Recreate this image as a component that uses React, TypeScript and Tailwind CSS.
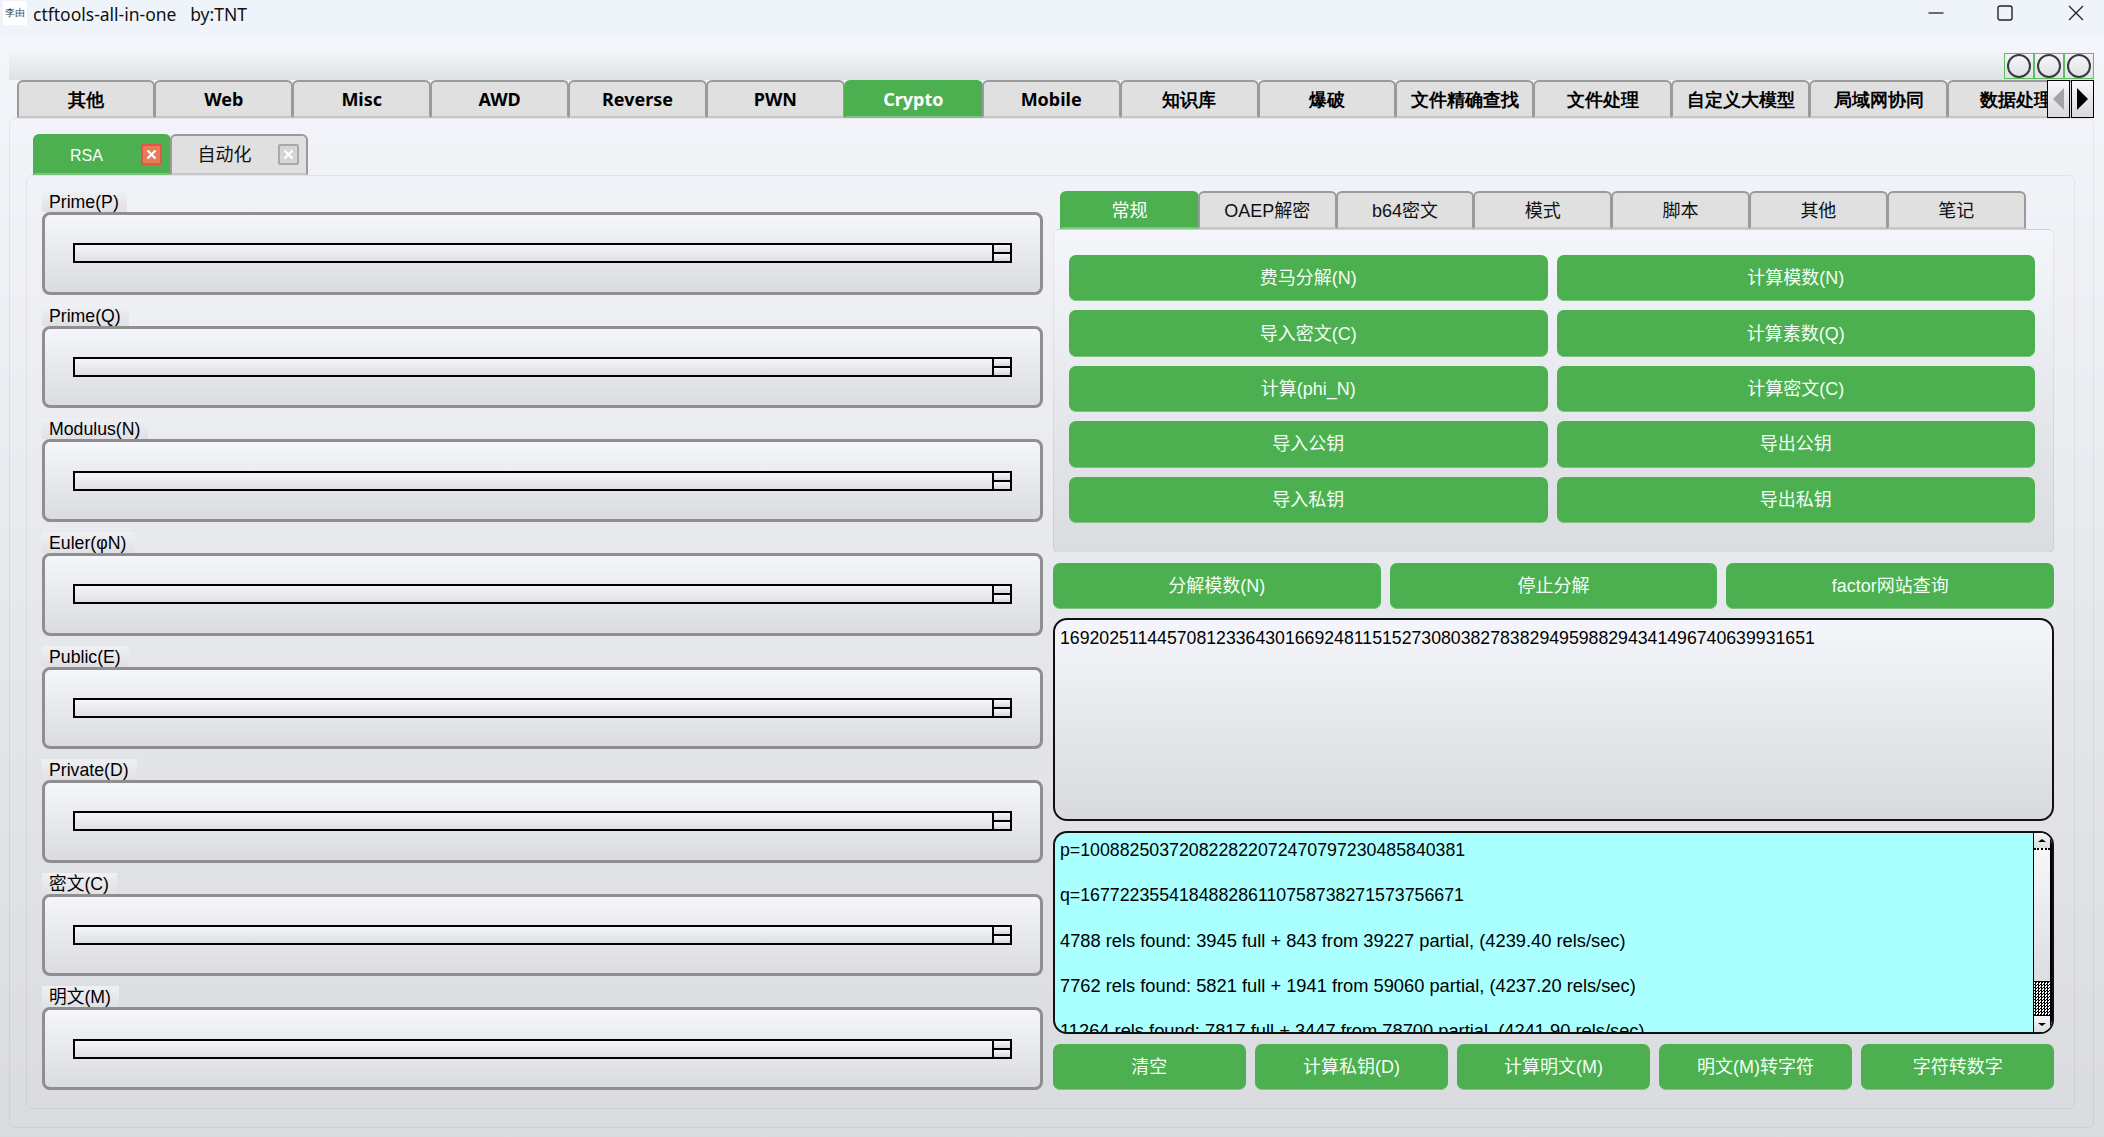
import React from "react";

const TOP = ["其他", "Web", "Misc", "AWD", "Reverse", "PWN", "Crypto", "Mobile", "知识库", "爆破", "文件精确查找", "文件处理", "自定义大模型", "局域网协同", "数据处理"];
const SUB = ["常规", "OAEP解密", "b64密文", "模式", "脚本", "其他", "笔记"];
const FIELDS = ["Prime(P)", "Prime(Q)", "Modulus(N)", "Euler(φN)", "Public(E)", "Private(D)", "密文(C)", "明文(M)"];
const GRID = ["费马分解(N)", "计算模数(N)", "导入密文(C)", "计算素数(Q)", "计算(phi_N)", "计算密文(C)", "导入公钥", "导出公钥", "导入私钥", "导出私钥"];
const NUMS = [
  "p=100882503720822822072470797230485840381",
  "q=167722355418488286110758738271573756671",
];
const RELS = [
  "4788 rels found: 3945 full + 843 from 39227 partial, (4239.40 rels/sec)",
  "7762 rels found: 5821 full + 1941 from 59060 partial, (4237.20 rels/sec)",
  "11264 rels found: 7817 full + 3447 from 78700 partial, (4241.90 rels/sec)",
];

function GreenButton({ label, className = "" }: { label: string; className?: string }) {
  return (
    <div className={`flex items-center justify-center rounded-[7px] border-b border-[#7cc47f] bg-[#4caf50] pt-[2px] text-[#f2fff4] ${className}`}>
      {label}
    </div>
  );
}

function Close({ active }: { active: boolean }) {
  return (
    <div
      className={`flex h-[21px] w-[21px] items-center justify-center rounded-[2px] border-2 ${
        active ? "border-[#e0574a] bg-[#ea7a56]" : "border-[#a9a9a9] bg-[#d6d6d6]"
      }`}
    >
      <svg width="11" height="11" viewBox="0 0 11 11">
        <path d="M1.5 1.5L9.5 9.5M9.5 1.5L1.5 9.5" stroke="#ffffff" strokeWidth="2.2" />
      </svg>
    </div>
  );
}

function Field({ label }: { label: string }) {
  return (
    <div className="flex min-h-0 flex-1 flex-col">
      <div className="h-[21px] w-fit bg-gradient-to-b from-[#eff0f3] to-[#e0e1e4] pl-[7px] pr-[8px] text-[17.7px] leading-[23px] text-black">
        {label}
      </div>
      <div className="flex min-h-0 flex-1 items-center rounded-[8px] border-[3px] border-[#8f8f90] bg-gradient-to-b from-[#f5f6fb] to-[#dbdce0] px-[28px]">
        <div className="flex h-[20px] w-full border-2 border-black bg-gradient-to-b from-[#f5f6fb] to-[#dfe0e4]">
          <div className="flex-1" />
          <div className="flex w-[18px] flex-col border-l-2 border-black">
            <div className="flex-1 border-b-2 border-black bg-gradient-to-b from-[#f7f7fa] to-[#d8d9dd]" />
            <div className="flex-1 bg-gradient-to-b from-[#f7f7fa] to-[#d8d9dd]" />
          </div>
        </div>
      </div>
    </div>
  );
}

function Scrollbar() {
  return (
    <div className="flex h-full w-[19px] flex-col border-l border-r-2 border-black bg-white">
      <div className="flex h-[17px] items-center justify-center border-b-2 border-dotted border-black bg-gradient-to-b from-[#f7f7fa] to-[#dcdde1]">
        <div className="h-0 w-0 border-x-[4px] border-b-[3px] border-x-transparent border-b-black" />
      </div>
      <div className="h-[132px] border-b border-black bg-gradient-to-b from-[#f7f7fa] to-[#dcdde1]" />
      <div className="flex-1 bg-[repeating-conic-gradient(#000_0_25%,#fff_0_50%)] bg-[length:3px_3px]" />
      <div className="flex h-[17px] items-center justify-center border-t border-black bg-gradient-to-b from-[#f7f7fa] to-[#dcdde1]">
        <div className="h-0 w-0 border-x-[4px] border-t-[3px] border-x-transparent border-t-black" />
      </div>
    </div>
  );
}

export default function App() {
  return (
    <div className="flex h-[1137px] w-[2104px] flex-col overflow-hidden font-[Liberation_Sans,Noto_Sans_CJK_SC,sans-serif] text-[18px] text-black">
      {/* Title bar */}
      <div className="flex h-[36px] shrink-0 items-start bg-[#eff4fa]">
        <div className="ml-[3px] mt-[1px] flex h-[24px] w-[24px] items-center justify-center bg-white font-sans text-[9.5px] leading-none text-[#444]">
          李由
        </div>
        <div className="ml-[6px] mt-[4px] whitespace-pre font-sans text-[17.5px] leading-[20px] text-[#111]">
          ctftools-all-in-one{"   "}by:TNT
        </div>
        <div className="ml-auto mt-[5px] flex items-center">
          <svg width="16" height="16" viewBox="0 0 16 16" className="mr-[53px]">
            <path d="M0.5 8H15.5" stroke="#222" strokeWidth="1.3" />
          </svg>
          <svg width="16" height="16" viewBox="0 0 16 16" className="mr-[55px]">
            <rect x="1" y="1" width="14" height="14" rx="2" fill="none" stroke="#222" strokeWidth="1.4" />
          </svg>
          <svg width="16" height="16" viewBox="0 0 16 16" className="mr-[20px]">
            <path d="M1 1L15 15M15 1L1 15" stroke="#222" strokeWidth="1.3" />
          </svg>
        </div>
      </div>

      {/* Window body */}
      <div className="flex min-h-0 flex-1 flex-col bg-gradient-to-b from-[#f5f6fb] to-[#dadbdf] pb-[9px] pl-[9px] pr-[10px]">
        {/* Band */}
        <div className="flex h-[44px] shrink-0 items-end justify-end bg-gradient-to-b from-[#f5f6fb] from-30% to-[#e0e1e5]">
          {[0, 1, 2].map((i) => (
            <div key={i} className="mb-[1px] flex h-[26px] w-[30px] items-center justify-center border border-[#5cc05f]">
              <div className="h-[24px] w-[24px] rounded-full border-2 border-[#3a3a3c] bg-gradient-to-b from-[#f5f6fb] to-[#e0e1e5]" />
            </div>
          ))}
        </div>

        {/* Top tabs */}
        <div className="relative flex h-[38px] shrink-0 pl-[7.5px]">
          {TOP.map((t) => {
            const on = t === "Crypto";
            return (
              <div
                key={t}
                className={`-mr-px flex h-[38px] w-[138.9px] shrink-0 items-center justify-center rounded-t-[6px] border-x-2 border-b-2 border-t-2 font-sans font-bold ${
                  on
                    ? "border-[#4caf50] border-b-[#7cc47f] bg-[#4caf50] text-white"
                    : "border-[#9a9a9a] border-b-[#c6c6c6] bg-[#e0e0e0] text-black"
                }`}
              >
                {t}
              </div>
            );
          })}
          <div className="absolute right-0 top-0 flex h-[38px] gap-[1px]">
            <div className="flex w-[23px] items-center justify-center border border-black bg-gradient-to-b from-[#f7f7fa] to-[#d8d9dd]">
              <div className="h-0 w-0 border-y-[11px] border-r-[11px] border-y-transparent border-r-[#a3a3a3]" />
            </div>
            <div className="flex w-[23px] items-center justify-center border border-black bg-gradient-to-b from-[#f7f7fa] to-[#d8d9dd]">
              <div className="h-0 w-0 border-y-[11px] border-l-[11px] border-y-transparent border-l-black" />
            </div>
          </div>
        </div>

        {/* Outer pane */}
        <div className="flex min-h-0 flex-1 flex-col rounded-[6px] border border-black/[0.06] pb-[18px] pl-[16px] pr-[18px] pt-[15px]">
          {/* Inner tabs */}
          <div className="flex h-[41px] shrink-0 pl-[7px]">
            <div className="-mr-px flex h-[41px] w-[138px] items-center justify-between rounded-t-[6px] border-x-2 border-b-2 border-t-2 border-[#4caf50] border-b-[#7cc47f] bg-[#4caf50] pr-[7px] text-white">
              <div className="flex-1 pr-[3px] pt-[2px] text-center text-[16px]">RSA</div>
              <Close active />
            </div>
            <div className="-mr-px flex h-[41px] w-[138px] items-center justify-between rounded-t-[6px] border-x-2 border-b-2 border-t-2 border-[#9a9a9a] border-b-[#c6c6c6] bg-[#e0e0e0] pr-[7px] text-[#111]">
              <div className="flex-1 pr-[1px] pt-[2px] text-center">自动化</div>
              <Close active={false} />
            </div>
          </div>

          {/* Inner pane */}
          <div className="flex min-h-0 flex-1 gap-[10px] rounded-[6px] border border-black/[0.06] pl-[15px] pr-[18px] pt-[15px]">
            {/* Left column */}
            <div className="flex h-[899px] w-[1001px] flex-col gap-[10px]">
              {FIELDS.map((f) => (
                <Field key={f} label={f} />
              ))}
            </div>

            {/* Right column */}
            <div className="flex h-[899px] w-[1001px] flex-col">
              <div className="flex h-[38px] shrink-0 pl-[7px]">
                {SUB.map((t, i) => (
                  <div
                    key={t}
                    className={`-mr-px flex h-[38px] w-[138.8px] shrink-0 items-center justify-center rounded-t-[6px] border-x-2 border-b-2 border-t-2 pt-[2px] ${
                      i === 0
                        ? "border-[#4caf50] border-b-[#7cc47f] bg-[#4caf50] text-white"
                        : "border-[#9a9a9a] border-b-[#c6c6c6] bg-[#e0e0e0] text-[#111]"
                    }`}
                  >
                    {t}
                  </div>
                ))}
              </div>

              <div className="h-[324px] shrink-0 rounded-[6px] border border-black/[0.06] bg-gradient-to-b from-[#f5f6fb] to-[#dbdce0] pl-[15px] pr-[18px] pt-[25px]">
                <div className="grid h-[268px] grid-cols-2 grid-rows-5 gap-x-[9px] gap-y-[9px]">
                  {GRID.map((g) => (
                    <GreenButton key={g} label={g} />
                  ))}
                </div>
              </div>

              <div className="mt-[10px] flex h-[46px] shrink-0 gap-[9px]">
                <GreenButton label="分解模数(N)" className="flex-1" />
                <GreenButton label="停止分解" className="flex-1" />
                <GreenButton label="factor网站查询" className="flex-1" />
              </div>

              <div className="mt-[9px] h-[203px] shrink-0 rounded-[14px] border-2 border-[#111] bg-gradient-to-b from-[#f5f6fb] to-[#d9dade] px-[5px] pt-[8px] text-[17.7px] leading-[21px]">
                16920251144570812336430166924811515273080382783829495988294341496740639931651
              </div>

              <div className="mt-[10px] flex h-[203px] shrink-0 overflow-hidden rounded-[14px] border-2 border-[#111] bg-[#aaffff]">
                <div className="flex min-w-0 flex-1 flex-col gap-[24px] px-[5px] pt-[7px] leading-[21px]">
                  {NUMS.map((l) => (
                    <div key={l} className="shrink-0 whitespace-nowrap text-[17.75px]">
                      {l}
                    </div>
                  ))}
                  {RELS.map((l) => (
                    <div key={l} className="shrink-0 whitespace-nowrap text-[18.3px]">
                      {l}
                    </div>
                  ))}
                </div>
                <Scrollbar />
              </div>

              <div className="mt-[10px] flex h-[46px] shrink-0 gap-[9.5px]">
                {["清空", "计算私钥(D)", "计算明文(M)", "明文(M)转字符", "字符转数字"].map((b) => (
                  <GreenButton key={b} label={b} className="flex-1" />
                ))}
              </div>
            </div>
          </div>
        </div>
      </div>
    </div>
  );
}
